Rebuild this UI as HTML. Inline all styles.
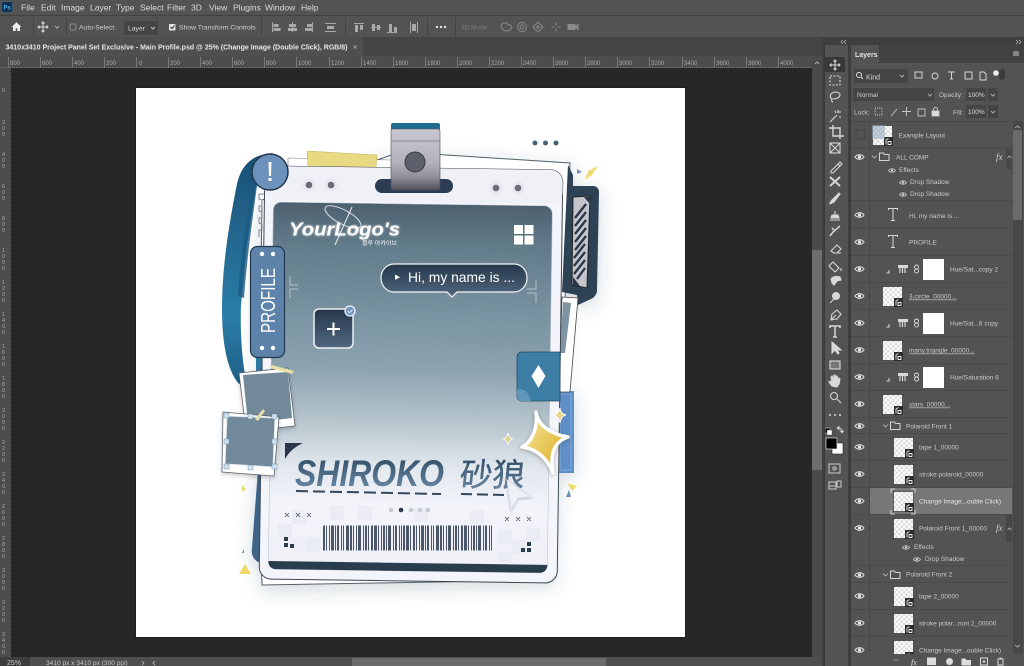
<!DOCTYPE html>
<html><head><meta charset="utf-8"><title>Photoshop</title>
<style>html,body{margin:0;padding:0;background:#272727;overflow:hidden}svg{display:block;filter:blur(.25px)}text{font-family:"Liberation Sans","Noto Sans CJK SC",sans-serif}</style></head>
<body>
<svg width="1024" height="666" viewBox="0 0 1024 666" xmlns="http://www.w3.org/2000/svg">
<defs>
<pattern id="chk" width="5" height="5" patternUnits="userSpaceOnUse"><rect width="5" height="5" fill="#fff"/><rect width="2.500" height="2.500" fill="#dcdcdc"/><rect x="2.500" y="2.500" width="2.500" height="2.500" fill="#dcdcdc"/></pattern>
<pattern id="hatch" width="3" height="3" patternUnits="userSpaceOnUse" patternTransform="rotate(45)"><rect width="1.200" height="3" fill="#000"/></pattern>
<linearGradient id="hfade" x1="0" y1="0" x2="0" y2="1"><stop offset="0" stop-color="#fff" stop-opacity=".07"/><stop offset=".7" stop-color="#fff" stop-opacity=".04"/><stop offset="1" stop-color="#fff" stop-opacity="0"/></linearGradient>
<mask id="hm"><rect x="260" y="200" width="300" height="250" fill="url(#hfade)"/></mask>
<linearGradient id="panel" x1="0" y1="0" x2="0" y2="1"><stop offset="0" stop-color="#4f6373"/><stop offset=".12" stop-color="#66808f"/><stop offset=".3" stop-color="#7c96a5"/><stop offset=".45" stop-color="#8fa6b3"/><stop offset=".6" stop-color="#bac8d0"/><stop offset=".72" stop-color="#e2e8ee"/><stop offset=".82" stop-color="#f2f4fa"/><stop offset="1" stop-color="#f0f1f8"/></linearGradient>
<linearGradient id="lan" x1="0" y1="0" x2="0" y2="1"><stop offset="0" stop-color="#1b4f74"/><stop offset=".7" stop-color="#2a7ea8"/><stop offset="1" stop-color="#1f5f88"/></linearGradient>
<linearGradient id="clip" x1="0" y1="0" x2="0" y2="1"><stop offset="0" stop-color="#c9c8d0"/><stop offset=".55" stop-color="#b3b1ba"/><stop offset=".8" stop-color="#8f8d97"/><stop offset="1" stop-color="#4f4e5a"/></linearGradient>
<linearGradient id="dk" x1="0" y1="0" x2="0" y2="1"><stop offset="0" stop-color="#26374b"/><stop offset="1" stop-color="#50677d"/></linearGradient>
<linearGradient id="nm" x1="0" y1="0" x2="0" y2="1"><stop offset="0" stop-color="#2c4660"/><stop offset="1" stop-color="#7091ad"/></linearGradient>
<linearGradient id="gold" x1="0" y1="0" x2="1" y2="1"><stop offset="0" stop-color="#f5e9a6"/><stop offset=".6" stop-color="#e6c34f"/><stop offset="1" stop-color="#c99e2e"/></linearGradient>
<filter id="sh" x="-20%" y="-20%" width="140%" height="140%"><feDropShadow dx="0" dy="5" stdDeviation="9" flood-color="#2b3f5c" flood-opacity=".2"/></filter>
<filter id="b1"><feGaussianBlur stdDeviation=".35"/></filter>
<filter id="gl" x="-10%" y="-40%" width="120%" height="180%"><feDropShadow dx="0" dy="0" stdDeviation="1.200" flood-color="#fff" flood-opacity=".7"/></filter>
<g id="eye"><path d="M-4.500 0C-2.500-3 2.500-3 4.500 0C2.500 3-2.500 3-4.500 0Z" fill="none" stroke="#e6e6e6" stroke-width="1"/><circle r="1.600" fill="#e6e6e6"/></g>
<g id="eyes"><path d="M-3.500 0C-2-2.300 2-2.300 3.500 0C2 2.300-2 2.300-3.500 0Z" fill="none" stroke="#d0d0d0" stroke-width=".8"/><circle r="1.200" fill="#d0d0d0"/></g>
<g id="thumb"><rect x=".5" y=".5" width="20" height="20" fill="url(#chk)" stroke="#222" stroke-width=".6"/><rect x="12" y="12" width="9" height="9" fill="#2c2c2c"/><path d="M14 19.500v-4.500l2.500-1.500M16 19.500h3v-3h-3z" fill="none" stroke="#eee" stroke-width=".9"/></g>
<g id="hue"><path d="M-10 1v3h-2.500" fill="none" stroke="#ddd" stroke-width="1"/><rect x="-1" y="-4" width="10" height="8" fill="#d8d8d8"/><rect x="-1" y="-1" width="10" height="5" fill="#555"/><path d="M1-1v5M3.500-1v5M6-1v5" stroke="#ddd" stroke-width="1.100"/><circle cx="17.500" cy="-2" r="2" fill="none" stroke="#ddd" stroke-width=".9"/><circle cx="17.500" cy="2" r="2" fill="none" stroke="#ddd" stroke-width=".9"/><rect x="24" y="-10" width="21" height="21" fill="#fff"/></g>
</defs>

<!-- chrome -->
<rect width="1024" height="666" fill="#272727"/>
<rect width="1024" height="15" fill="#535353"/>
<rect y="15" width="1024" height="1" fill="#414141"/>
<rect y="16" width="1024" height="21" fill="#535353"/>
<rect y="37" width="1024" height="19" fill="#454545"/>
<rect y="37" width="363" height="19" fill="#4f4f4f"/>
<rect y="56" width="812" height="12" fill="#4d4d4d"/>
<rect y="56" width="10" height="610" fill="#4d4d4d"/>
<path d="M0 67.500H812M10.500 68V666" stroke="#828282" stroke-dasharray="1 1" stroke-width=".7"/>

<!-- menu -->
<rect x="2" y="2" width="10" height="10" rx="1" fill="#0c2c4a" stroke="#1d5e92" stroke-width=".6"/>
<text x="3.500" y="9.500" font-size="6" font-weight="bold" fill="#53b3f0">Ps</text>
<g font-size="8.500" fill="#dcdcdc">
<text x="21" y="10.500">File</text><text x="41" y="10.500">Edit</text><text x="61" y="10.500">Image</text><text x="90" y="10.500">Layer</text><text x="116" y="10.500">Type</text><text x="140" y="10.500">Select</text><text x="167" y="10.500">Filter</text><text x="191" y="10.500">3D</text><text x="209" y="10.500">View</text><text x="233" y="10.500">Plugins</text><text x="265" y="10.500">Window</text><text x="301" y="10.500">Help</text>
</g>

<!-- options bar -->
<path d="M11.500 27l5-4.800 5 4.800h-1.500v4h-2.700v-2.800h-1.600v2.800h-2.700v-4z" fill="#eee"/>
<path d="M33.500 17.500v18M66.500 17.500v18M157.500 17.500v18M261.500 17.500v18M345.500 17.500v18M427.500 17.500v18M455.500 17.500v18" stroke="#444" stroke-width="1"/>
<g stroke="#dedede" fill="none" stroke-width="1"><path d="M43 22v10M38 27h10M41.500 23.500l1.500-1.500 1.500 1.500M41.500 30.500l1.500 1.500 1.500-1.500M39.500 25.500l-1.500 1.500 1.500 1.500M46.500 25.500l1.500 1.500-1.500 1.500"/><path d="M55 26l2 2 2-2" stroke="#aaa"/><rect x="70" y="24" width="6" height="6" rx="1" stroke="#888"/></g>
<text x="79" y="29.500" font-size="6.800" fill="#cfcfcf">Auto-Select:</text>
<rect x="124" y="21" width="33" height="14" fill="#454545"/>
<text x="128" y="30.500" font-size="6.800" fill="#d6d6d6">Layer</text>
<path d="M151 27l2 2 2-2" stroke="#bbb" fill="none"/>
<rect x="169" y="24" width="6.500" height="6.500" rx="1" fill="#e3e3e3"/><path d="M170.500 27l1.500 1.500 2.500-3" stroke="#333" fill="none"/>
<text x="179" y="29.500" font-size="6.800" fill="#d0d0d0">Show Transform Controls</text>
<g fill="#a9a9a9">
<path d="M272 22h1v10h-1zM273.500 24h5v3h-5zM273.500 28h7v3h-7z"/>
<path d="M292 22h1v10h-1zM289 24h7v3h-7zM288 28h9v3h-9z"/>
<path d="M312 22h1v10h-1zM307 24h5v3h-5zM305 28h7v3h-7z"/>
<path d="M325 23h11v1h-11zM327 26h7v3h-7zM325 31h11v1h-11z"/>
<path d="M354 23h10v1h-10zM355 25h3v7h-3zM360 25h3v5h-3z"/>
<path d="M371 27h10v1h-10zM372 24h3v7h-3zM377 25h3v5h-3z"/>
<path d="M387 32h10v1h-10zM389 24h3v8h-3zM394 27h3v5h-3z"/>
<path d="M410 22h1v11h-1zM417 22h1v11h-1zM412 24h4v7h-4z"/>
</g>
<g fill="#e0e0e0"><circle cx="437" cy="27" r="1.200"/><circle cx="441" cy="27" r="1.200"/><circle cx="445" cy="27" r="1.200"/></g>
<text x="461" y="29.500" font-size="6.500" fill="#7f7f7f">3D Mode:</text>
<g fill="none" stroke="#8a8a8a" stroke-width="1"><path d="M501 26c1-4 6-4 7-1 3-1 5 3 3 4-2 3-9 3-10-3z"/><circle cx="522" cy="27" r="4.500"/><circle cx="522" cy="27" r="2"/><path d="M538 22l5 5-5 5-5-5zM538 25v4M536 27h4"/><path d="M556 22.500v3M556 28.500v3M551.500 27h3M557.500 27h3"/><path d="M568 24.500h7v5h-7zM575 27l3-2.500v5z" fill="#8a8a8a"/></g>

<!-- tab -->
<text x="5.500" y="49.500" font-size="7.400" font-weight="bold" fill="#e6e6e6" textLength="342" lengthAdjust="spacingAndGlyphs">3410x3410 Project Panel Set Exclusive - Main Profile.psd @ 25% (Change Image (Double Click), RGB/8)</text>
<path d="M353.500 45.500l3 3M356.500 45.500l-3 3" stroke="#aaa" stroke-width=".8"/>

<!-- rulers -->
<g font-size="6" fill="#a8a8a8">
<text x="10" y="65">800</text><text x="42" y="65">600</text><text x="74" y="65">400</text><text x="106" y="65">200</text><text x="139" y="65">0</text><text x="170" y="65">200</text><text x="202" y="65">400</text><text x="234" y="65">600</text><text x="266" y="65">800</text><text x="298" y="65">1000</text><text x="331" y="65">1200</text><text x="363" y="65">1400</text><text x="395" y="65">1600</text><text x="427" y="65">1800</text><text x="459" y="65">2000</text><text x="491" y="65">2200</text><text x="523" y="65">2400</text><text x="555" y="65">2600</text><text x="587" y="65">2800</text><text x="619" y="65">3000</text><text x="651" y="65">3200</text><text x="684" y="65">3400</text><text x="716" y="65">3600</text><text x="748" y="65">3800</text><text x="780" y="65">4000</text>
</g>
<g stroke="#8c8c8c" stroke-width=".7"><path d="M8.500 57v10M40.500 57v10M72.500 57v10M104.500 57v10M136.500 57v10M168.500 57v10M200.500 57v10M232.500 57v10M264.500 57v10M296.500 57v10M329.500 57v10M361.500 57v10M393.500 57v10M425.500 57v10M457.500 57v10M489.500 57v10M521.500 57v10M553.500 57v10M585.500 57v10M617.500 57v10M649.500 57v10M682.500 57v10M714.500 57v10M746.500 57v10M778.500 57v10"/></g>
<g font-size="5.500" fill="#a8a8a8">
<text x="2" y="92">0</text>
<text x="2" y="124">2</text><text x="2" y="130">0</text><text x="2" y="136">0</text>
<text x="2" y="156">4</text><text x="2" y="162">0</text><text x="2" y="168">0</text>
<text x="2" y="188">6</text><text x="2" y="194">0</text><text x="2" y="200">0</text>
<text x="2" y="220">8</text><text x="2" y="226">0</text><text x="2" y="232">0</text>
<text x="2" y="252">1</text><text x="2" y="258">0</text><text x="2" y="264">0</text><text x="2" y="270">0</text>
<text x="2" y="284">1</text><text x="2" y="290">2</text><text x="2" y="296">0</text><text x="2" y="302">0</text>
<text x="2" y="316">1</text><text x="2" y="322">4</text><text x="2" y="328">0</text><text x="2" y="334">0</text>
<text x="2" y="348">1</text><text x="2" y="354">6</text><text x="2" y="360">0</text><text x="2" y="366">0</text>
<text x="2" y="380">1</text><text x="2" y="386">8</text><text x="2" y="392">0</text><text x="2" y="398">0</text>
<text x="2" y="412">2</text><text x="2" y="418">0</text><text x="2" y="424">0</text><text x="2" y="430">0</text>
<text x="2" y="444">2</text><text x="2" y="450">2</text><text x="2" y="456">0</text><text x="2" y="462">0</text>
<text x="2" y="476">2</text><text x="2" y="482">4</text><text x="2" y="488">0</text><text x="2" y="494">0</text>
<text x="2" y="508">2</text><text x="2" y="514">6</text><text x="2" y="520">0</text><text x="2" y="526">0</text>
<text x="2" y="540">2</text><text x="2" y="546">8</text><text x="2" y="552">0</text><text x="2" y="558">0</text>
<text x="2" y="572">3</text><text x="2" y="578">0</text><text x="2" y="584">0</text><text x="2" y="590">0</text>
<text x="2" y="604">3</text><text x="2" y="610">2</text><text x="2" y="616">0</text><text x="2" y="622">0</text>
<text x="2" y="636">3</text><text x="2" y="642">4</text><text x="2" y="648">0</text><text x="2" y="654">0</text>
</g>

<!-- artboard -->
<rect x="136" y="88" width="549" height="549" fill="#fff"/>
<rect x="135.500" y="87.500" width="550" height="550" fill="none" stroke="#1b1b1b" stroke-width=".6"/>

<g filter="url(#b1)">
<g filter="url(#sh)">
<!-- back papers -->
<polygon points="400,152 570,163 565,300 553,580 262,585 258,470 262,200" fill="#fff" stroke="#55606d" stroke-width="1"/>
<path d="M258 470h6v92h-6c-5-3-7-8-6-14z" fill="#3e6387"/>
<rect x="558" y="391" width="16" height="82" fill="#5e8fc6"/>
<rect x="560" y="394" width="11" height="76" fill="none" stroke="#8fb2dc" stroke-width=".7"/>
<!-- right dark tab -->
<path d="M568 165l5 10v11h20c4 0 6 3 6 6l-2 98c0 4-2 6-4 8l-15 7-1-10-15-3z" fill="#2f4357"/>
</g>
<polygon points="562,297 578,298 570,392 559,392" fill="#fff" stroke="#444" stroke-width=".8"/>
<polygon points="563,302 571,303 565,353 560,353" fill="#7e94a3"/>
<polygon points="573,197 590,196 587,288 572,285" fill="#c4c4ca" stroke="#222" stroke-width="1"/>
<path d="M586 204l-11 14M586 212l-11 14M586 220l-11 14M586 228l-11 14M586 236l-11 14M585 244l-11 14M585 252l-11 14M585 260l-11 14M585 268l-8 11" stroke="#283646" stroke-width="2.300"/>
<path d="M584 197l6 0-1 6zM573 277l0 8 7 1z" fill="#283646"/>

<!-- lanyard -->
<path d="M270 154c-14 0-28 8-33 30-7 35-15 80-15 125 0 30 4 60 17 75l7-4c-4-20-6-50-5-75l6-60 12-78 14-15z" fill="url(#lan)"/>
<path d="M280 158c-16 0-24 6-28 26-5 32-12 75-14 112l6 2c3-40 8-75 12-105 3-20 8-26 24-28z" fill="#1d5a82" opacity=".8"/>
<rect x="256" y="355" width="15" height="20" fill="#2f78a0"/>
<rect x="266" y="355" width="6" height="20" fill="#fff"/>

<!-- tape + strips -->
<polygon points="288,158 392,160 392,170 288,168" fill="#fff" stroke="#777" stroke-width=".6"/>
<polygon points="307,151 377,155 376,168 308,167" fill="#e8da83" stroke="#b9ad60" stroke-width=".5"/>

<!-- front card -->
<g transform="rotate(.8 411 374)">
<rect x="262" y="168" width="298" height="413" rx="12" fill="#f4f5fa" stroke="#3d4652" stroke-width="1"/>
<rect x="262" y="168" width="298" height="34" rx="12" fill="#f0f0f7"/>
<rect x="271" y="204" width="279" height="367" rx="8" fill="url(#panel)" stroke="#bcc6cf" stroke-width=".6"/>
<rect x="271" y="204" width="279" height="245" rx="8" fill="url(#hatch)" mask="url(#hm)"/>
<path d="M271 563c0 5 3 8 8 8h263c5 0 8-3 8-8z" fill="#2b3c50"/>
</g>
<!-- checkers bottom -->
<g fill="#e6e8f2" opacity=".55">
<rect x="278" y="524" width="14" height="14"/><rect x="292" y="510" width="14" height="14"/><rect x="306" y="538" width="14" height="14"/><rect x="292" y="538" width="14" height="14" opacity=".5"/>
<rect x="330" y="506" width="14" height="14"/><rect x="358" y="506" width="14" height="14"/><rect x="414" y="508" width="14" height="14"/><rect x="470" y="510" width="14" height="14"/>
<rect x="498" y="530" width="14" height="14"/><rect x="512" y="540" width="14" height="14"/><rect x="526" y="528" width="14" height="14"/><rect x="498" y="552" width="14" height="10"/>
</g>

<!-- clip slot + dots -->
<rect x="375" y="179" width="78" height="14" rx="7" fill="#2c3e52"/>
<g fill="#e8e8f0"><circle cx="309" cy="185" r="6.500"/><circle cx="331" cy="185" r="6.500"/><circle cx="496" cy="188" r="6.500"/><circle cx="518" cy="188" r="6.500"/></g>
<g fill="#6c6c76"><circle cx="309" cy="185" r="3.300"/><circle cx="331" cy="185" r="3.300"/><circle cx="496" cy="188" r="3.300"/><circle cx="518" cy="188" r="3.300"/></g>
<!-- clip -->
<rect x="391" y="123" width="49" height="10" rx="2" fill="#1f6d8f"/>
<rect x="391" y="129" width="49" height="61" rx="2" fill="url(#clip)" stroke="#4d4c58" stroke-width=".6"/>
<path d="M391 141h49" stroke="#8b8a94" stroke-width="1"/>
<circle cx="415" cy="162" r="10" fill="#5e5e6c" stroke="#3a3a46" stroke-width="1"/>

<!-- badge circle -->
<circle cx="270" cy="172" r="18" fill="#6c91ba" stroke="#24374e" stroke-width="1.500"/>
<path d="M268.500 162h3l-.5 14h-2zM268.500 178h3v3h-3z" fill="#fff"/>
<!-- profile tag -->
<rect x="250.500" y="246.500" width="34" height="111" rx="7" fill="#5d83aa" stroke="#24384f" stroke-width="1.200"/>
<g fill="#fff"><circle cx="262" cy="254" r="2.200"/><circle cx="273" cy="254" r="2.200"/><circle cx="262" cy="348" r="2.200"/><circle cx="273" cy="348" r="2.200"/></g>
<text transform="translate(275,333) rotate(-90)" font-size="20.500" fill="#fff" textLength="65" lengthAdjust="spacingAndGlyphs">PROFILE</text>
<path d="M259 194h5M259 194v5l3 1v6h-3v5l3 1v6h-3v5l3 1v6h-3v7" fill="none" stroke="#808a96" stroke-width="1"/>

<!-- logo -->
<g filter="url(#gl)">
<text x="289" y="235.500" font-size="18.500" font-weight="bold" font-style="italic" fill="#fff" textLength="111" lengthAdjust="spacingAndGlyphs">YourLogo's</text>
</g>
<text x="362" y="245" font-size="5.500" fill="#fff" textLength="35" lengthAdjust="spacingAndGlyphs">블루 아카이브</text>
<path d="M352 207l-17 38" stroke="#fff" stroke-width="1" opacity=".85"/>
<ellipse cx="343" cy="217" rx="20" ry="7" transform="rotate(28 343 217)" fill="none" stroke="#fff" stroke-width="1.100" opacity=".75"/>
<g fill="#fff"><rect x="514" y="225" width="9" height="9"/><rect x="524.500" y="225" width="9" height="9"/><rect x="514" y="235.500" width="9" height="9"/><rect x="524.500" y="235.500" width="9" height="9"/></g>
<!-- brackets -->
<g fill="none" stroke="#c5ced6" stroke-width="1" opacity=".8"><path d="M290 276v9h8M298 289h-8v9"/><path d="M536 280v9h-9M527 293h9v10"/></g>

<!-- bubble -->
<path d="M394 264h120c7 0 13 6 13 14s-6 14-13 14h-57l-5 5-5-5h-53c-7 0-13-6-13-14s6-14 13-14z" fill="url(#dk)" stroke="#f2f4f7" stroke-width="1.200"/>
<path d="M395 274.500l5 2.700-5 2.700z" fill="#fff"/>
<text x="408" y="282" font-size="14" fill="#fff" textLength="107" lengthAdjust="spacingAndGlyphs">Hi, my name is ...</text>

<!-- plus -->
<rect x="314" y="309" width="39" height="39" rx="5" fill="url(#dk)" stroke="#eef1f5" stroke-width="1.500"/>
<path d="M333.500 322.500v13M327 329h13" stroke="#fff" stroke-width="2"/>
<circle cx="350" cy="311" r="5" fill="#6f97c0" stroke="#eef1f5" stroke-width="1.300"/>
<path d="M347.800 311l1.700 1.700 3-3" stroke="#fff" fill="none" stroke-width=".8"/>

<!-- diamond tab -->
<path d="M522 352h38v49h-38c-3 0-5-2-5-5v-39c0-3 2-5 5-5z" fill="#3c7ea6" stroke="#27475f" stroke-width=".8"/>
<path d="M517 390c6-3 12 2 14 11h-9c-3 0-5-2-5-5z" fill="#5f97ba"/>
<path d="M538.500 365l7 11-7 12-7-12z" fill="#fff"/>

<!-- polaroids -->
<polygon points="239,373 288,368 295,426 246,431" fill="#fff" stroke="#5a6470" stroke-width=".8" style="filter:drop-shadow(0 2px 2px rgba(0,0,0,.2))"/>
<polygon points="243,375 288,372 292,418 248,423" fill="#718999"/>
<polygon points="223,412 279,417 274,476 222,472" fill="#fff" stroke="#5a6470" stroke-width=".8" style="filter:drop-shadow(0 2px 2px rgba(0,0,0,.2))"/>
<polygon points="227,416 275,418 273,467 225,464" fill="#718999" stroke="#dfe9f2" stroke-width="1"/>
<polygon points="272,365 294,371 292,374 270,368" fill="#e9e1a8"/>
<polygon points="255,419 263,409 265,411 258,421" fill="#e6ddac"/>
<g fill="#cfe0ef" stroke="#5f7d96" stroke-width=".4"><rect x="224" y="413" width="5" height="5"/><rect x="248" y="414" width="5" height="5"/><rect x="272" y="414" width="5" height="5"/><rect x="224" y="439" width="5" height="5"/><rect x="272" y="439" width="5" height="5"/><rect x="224" y="464" width="5" height="5"/><rect x="248" y="465" width="5" height="5"/><rect x="272" y="464" width="5" height="5"/></g>

<!-- name block -->
<path d="M285 443h18c-6 3-13 7-18 16z" fill="#2a3849"/>
<text x="295" y="486" font-size="37" font-weight="bold" font-style="italic" fill="url(#nm)" textLength="149" lengthAdjust="spacingAndGlyphs">SHIROKO</text>
<text x="459" y="486" font-size="32" fill="url(#nm)" stroke="#48647f" stroke-width=".4" textLength="65" lengthAdjust="spacingAndGlyphs" transform="skewX(-6) translate(51,0)">砂狼</text>
<path d="M296 491L441 494" stroke="#34465a" stroke-width="2" stroke-dasharray="12 5"/>
<path d="M461 494L505 495" stroke="#34465a" stroke-width="2" stroke-dasharray="11 5"/>
<g fill="#c6cbd3"><circle cx="391" cy="510" r="2.300"/><circle cx="411" cy="510" r="2.300"/><circle cx="420" cy="510" r="2.300"/><circle cx="428" cy="510" r="2.300"/></g><circle cx="401" cy="510" r="2.300" fill="#2b3a4c"/>
<g stroke="#47525f" stroke-width=".8"><path d="M285 513l4 4M289 513l-4 4M296 513l4 4M300 513l-4 4M307 513l4 4M311 513l-4 4"/><path d="M505 517l4 4M509 517l-4 4M516 517l4 4M520 517l-4 4M527 517l4 4M531 517l-4 4"/></g>
<g fill="#2a3a4c"><rect x="284" y="537" width="4" height="4"/><rect x="284" y="543" width="4" height="4"/><rect x="290" y="544" width="4" height="4"/><rect x="527" y="542" width="4" height="4"/><rect x="521" y="548" width="4" height="4"/><rect x="527" y="548" width="4" height="4"/></g>
<!-- barcode -->
<path d="M323 538H492" stroke="#2f3c4f" stroke-opacity=".85" stroke-width="25" stroke-dasharray="2 1 1 2 1 1 3 1 1 1 2 2 1 1 1 2 3 1 2 1 1 2 1 1 3 2 1 1 2 1 1 2 2 1 3 1 1 2 1 1 2 1 1 1 3 2 1 1 2 2 1 1 1 1 2 1 3 1 1 2"/>

<!-- stars + cursor -->
<path d="M536 412C538 425 550 434 568 437C556 441 549 452 553 473C548 460 538 449 522 447C532 442 538 428 536 412Z" fill="url(#gold)" stroke="#fff" stroke-width="3.500" stroke-linejoin="round" style="filter:drop-shadow(0 1px 2px rgba(60,60,60,.4))"/>
<path d="M560 408c.5 4 2 6 6 7-4 1-5 3-6 8-1-5-3-7-6-8 3-1 5-3 6-7z" fill="#e6d38a" stroke="#fff" stroke-width="1"/>
<path d="M508 433c.5 3 1.500 5 4.500 6-3 1-4 3-4.500 6-.5-3-2-5-4.500-6 3-1 4-3 4.500-6z" fill="#e0cd87" stroke="#fff" stroke-width=".8"/>
<path d="M507 480l24 17-13 1-7 12z" fill="#eef1f6" stroke="#d7dce6" stroke-width="1" style="filter:drop-shadow(0 1px 1px rgba(60,70,90,.3))"/>

<!-- dots + triangles -->
<g fill="#456277"><circle cx="535" cy="143" r="2.500"/><circle cx="545.500" cy="143" r="2.500"/><circle cx="556" cy="143" r="2.500"/></g>
<path d="M598 166L588 171L585 180L592 175Z" fill="#efdc6f"/>
<path d="M577 169l5 3-5 2z" fill="#6d8fb5"/>
<path d="M245 564l6 10h-12z" fill="#ecd96b"/>
<path d="M242 485v7l4-3z" fill="#ecd96b"/>
<path d="M242 553l2-4v4z" fill="#6d8fb5"/>
<path d="M567 483l10 3-5 5z" fill="#efdc6f"/>
<path d="M569 490l2 7-5 0z" fill="#6d8fb5"/>
</g>

<!-- scrollbars -->
<rect x="812" y="56" width="10" height="610" fill="#4a4a4a"/>
<rect x="812" y="250" width="10" height="220" fill="#6e6e6e"/>
<path d="M815 64l2-2 2 2" stroke="#aaa" fill="none"/>
<rect x="0" y="657" width="822" height="9" fill="#4f4f4f"/>
<rect x="0" y="657" width="30" height="9" fill="#3d3d3d"/>
<rect x="352" y="658" width="254" height="8" fill="#6a6a6a"/>
<text x="7" y="665" font-size="7" fill="#c8c8c8">25%</text>
<text x="46" y="665" font-size="6.600" fill="#c8c8c8">3410 px x 3410 px (300 ppi)</text>
<path d="M142 661l2 2-2 2M155 661l-2 2 2 2" stroke="#ccc" fill="none" stroke-width=".7"/>

<!-- right docks -->
<rect x="822" y="37" width="202" height="629" fill="#3f3f3f"/>
<rect x="824" y="45" width="24" height="621" fill="#535353"/>
<rect x="851" y="45" width="173" height="621" fill="#4f4f4f"/>
<rect x="851" y="45" width="173" height="18" fill="#424242"/>
<rect x="851" y="45" width="28" height="18" fill="#535353"/>
<rect x="851" y="63" width="173" height="591" fill="#535353"/>
<text x="855" y="57" font-size="7" font-weight="bold" fill="#e4e4e4">Layers</text>
<rect x="1013" y="51" width="6" height="5" fill="#858585"/>
<path d="M843 40l-2 2 2 2M846 40l-2 2 2 2M1016 40l2 2-2 2M1019 40l2 2-2 2" stroke="#bbb" fill="none" stroke-width=".7"/>

<!-- tools -->
<rect x="825" y="57" width="20" height="15" fill="#383838"/>
<g fill="none" stroke="#d8d8d8" stroke-width="1.100">
<path d="M835 60v10M830 65h10M833.500 61.500l1.500-1.500 1.500 1.500M833.500 68.500l1.500 1.500 1.500-1.500M831.500 63.500l-1.500 1.500 1.500 1.500M838.500 63.500l1.500 1.500-1.500 1.500"/>
<rect x="830" y="76" width="10" height="9" stroke-dasharray="2 1.500"/>
<path d="M832 99c-3-2-2-6 3-7 5 0 6 3 4 5-2 2-5 2-7 2-1 2 0 3 1 3"/>
<path d="M830 122l7-7M838 110v3M841 112h-3M841 117h-2M835 111l1 2"/>
<path d="M833 125v11h11M829 128h11v11" stroke-width="1.400"/>
<rect x="830" y="143" width="10" height="10"/><path d="M830 143l10 10M840 143l-10 10"/>
<path d="M831 171l7-7 2 2-7 7h-2zM838 164l2-2 2 2-2 2"/>
<path d="M830 177l10 9M840 177l-10 9" stroke-width="2"/>
<path d="M830 203l2-3 7-7 1 1-6 8-4 2z" fill="#d8d8d8"/>
<path d="M835 211v4M832 215h6l1 3h-8zM830 220h10" fill="#d8d8d8"/>
<path d="M830 236l3-4 7-6M832 228l2 2" stroke-width="1.500"/>
<path d="M831 251l6-6 4 4-4 4h-3zM833 253h8"/>
<path d="M833 262l6 6-4 4-6-6zM841 268v3"/>
<path d="M831 279c2-3 6-3 9-2l1 3-4 1-3 4-2-2z" fill="#d8d8d8"/>
<circle cx="836" cy="296" r="3.500" fill="#d8d8d8"/><path d="M834 299l-4 4"/>
<path d="M831 320l1-6 5-4 4 4-4 5zM836 315l-5 5"/>
<path d="M830 328v-2h10v2M835 326v11M833 337h4" stroke-width="1.500"/>
<path d="M832 342v11l3-3 3 4 1-1-2-3h4z" fill="#d8d8d8"/>
<rect x="830" y="361" width="10" height="8" fill="#777"/>
<path d="M832 386l-3-4 1-1 2 1-1-5 1-1 2 3v-4h1l1 4v-3h1l1 4 1-2 1 1-1 5-2 3z" fill="#d8d8d8"/>
<circle cx="834" cy="396" r="3.500"/><path d="M837 399l4 4"/>
</g>
<g fill="#d8d8d8"><circle cx="830" cy="415" r="1"/><circle cx="835" cy="415" r="1"/><circle cx="840" cy="415" r="1"/></g>
<rect x="825" y="428" width="5" height="5" fill="#000" stroke="#ddd" stroke-width=".5"/><rect x="827" y="430" width="5" height="5" fill="#fff" stroke="#333" stroke-width=".4"/>
<path d="M838 428c3 0 4 1 4 4M837 428l2-1.500v3zM842 433l-1.500-2h3z" stroke="#ddd" fill="none" stroke-width=".8"/>
<rect x="832" y="443" width="11" height="11" fill="#fff" stroke="#222" stroke-width=".6"/>
<rect x="826" y="438" width="11" height="11" fill="#000" stroke="#ddd" stroke-width=".7"/>
<rect x="829" y="464" width="11" height="9" fill="none" stroke="#ccc"/><circle cx="834.500" cy="468.500" r="2.500" fill="#999"/>
<path d="M829 486h8v-5h4v6h-4M829 482h7v7h-7z" fill="none" stroke="#ccc"/>
<path d="M824.500 45v621M850.500 45v621" stroke="#3a3a3a" stroke-width="1"/>

<!-- layers controls -->
<rect x="854" y="69" width="54" height="14" fill="#454545"/>
<circle cx="859" cy="75" r="2.500" fill="none" stroke="#ddd"/><path d="M861 77l2 2" stroke="#ddd"/>
<text x="866" y="79.500" font-size="7" fill="#d8d8d8">Kind</text>
<path d="M900 75l2 2 2-2" stroke="#aaa" fill="none"/>
<g fill="none" stroke="#d5d5d5"><rect x="915" y="72" width="7" height="6"/><circle cx="935" cy="76" r="3"/><path d="M948 72h7M951.500 72v7M950 79h3"/><rect x="965" y="72" width="7" height="7"/><path d="M980 72h4l2 2v6h-6z"/></g>
<rect x="999" y="69" width="6" height="11" rx="3" fill="#3a3a3a"/><circle cx="996" cy="73" r="2.800" fill="#eee"/>
<rect x="853" y="88" width="81" height="13" fill="#454545"/>
<text x="857" y="97" font-size="6.500" fill="#d0d0d0">Normal</text>
<path d="M928 94l2 2 2-2" stroke="#aaa" fill="none"/>
<text x="939" y="97" font-size="6.500" fill="#c8c8c8">Opacity:</text>
<rect x="966" y="88" width="20" height="13" fill="#454545"/><text x="968" y="97" font-size="6.500" fill="#dedede">100%</text>
<rect x="988" y="88" width="10" height="13" fill="#454545"/><path d="M991 94l2 2 2-2" stroke="#aaa" fill="none"/>
<text x="854" y="114.500" font-size="6.500" fill="#c8c8c8">Lock:</text>
<g fill="none" stroke="#c8c8c8" stroke-width=".9"><rect x="875" y="108" width="7" height="7" stroke-dasharray="1 1"/><path d="M891 116l6-7"/><path d="M906.500 107v9M902 111.500h9"/><rect x="918" y="109" width="7" height="7"/><rect x="932" y="111" width="7" height="5" fill="#ddd"/><path d="M933.500 111v-1.500a2 2 0 0 1 4 0v1.500"/></g>
<text x="953" y="114.500" font-size="6.500" fill="#c8c8c8">Fill:</text>
<rect x="966" y="105" width="20" height="13" fill="#454545"/><text x="968" y="114" font-size="6.500" fill="#dedede">100%</text>
<rect x="988" y="105" width="10" height="13" fill="#454545"/><path d="M991 111l2 2 2-2" stroke="#aaa" fill="none"/>

<!-- layer rows -->
<rect x="870" y="488" width="142" height="26" fill="#777"/>
<path d="M851 121.500H1012M851 147.500H1012M851 200.500H1012M851 228.500H1012M851 255.500H1012M851 282.500H1012M851 309.500H1012M851 336.500H1012M851 363.500H1012M851 390.500H1012M851 417.500H1012M851 433.500H1012M851 460.500H1012M851 487.500H1012M851 514.500H1012M851 565.500H1012M851 582.500H1012M851 609.500H1012M851 636.500H1012M869.500 122V654" stroke="#4a4a4a" stroke-width="1"/>
<rect x="1013" y="121" width="10" height="533" fill="#474747"/>
<rect x="1013" y="130" width="9" height="90" fill="#6a6a6a"/>
<path d="M1015 128l2.500-2 2.500 2M1015 645l2.500 2 2.500-2" stroke="#aaa" fill="none"/>

<rect x="856" y="130" width="9" height="9" fill="none" stroke="#444"/>
<use href="#thumb" x="872" y="125"/>
<rect x="872" y="125" width="13" height="14" fill="#8fa7bd" opacity=".55"/>
<use href="#eye" x="859.500" y="157"/>
<use href="#eye" x="859.500" y="215"/>
<use href="#eye" x="859.500" y="242"/>
<use href="#eye" x="859.500" y="269"/>
<use href="#eye" x="859.500" y="296"/>
<use href="#eye" x="859.500" y="323"/>
<use href="#eye" x="859.500" y="350"/>
<use href="#eye" x="859.500" y="377"/>
<use href="#eye" x="859.500" y="404"/>
<use href="#eye" x="859.500" y="426"/>
<use href="#eye" x="859.500" y="447"/>
<use href="#eye" x="859.500" y="474"/>
<use href="#eye" x="859.500" y="501"/>
<use href="#eye" x="859.500" y="528"/>
<use href="#eye" x="859.500" y="575"/>
<use href="#eye" x="859.500" y="596"/>
<use href="#eye" x="859.500" y="623"/>
<use href="#eye" x="859.500" y="650"/>
<use href="#eyes" x="892" y="170.500"/>
<use href="#eyes" x="903" y="182.500"/>
<use href="#eyes" x="903" y="194.500"/>
<use href="#eyes" x="906" y="547.500"/>
<use href="#eyes" x="917" y="559.500"/>

<path d="M872 155.500l2.500 2.500 2.500-2.500M883 424.500l2.500 2.500 2.500-2.500M883 573.500l2.500 2.500 2.500-2.500" stroke="#bdbdbd" fill="none" stroke-width=".8"/>
<path d="M879.500 153h4l1 1.500h4.500v6h-9.500z" fill="none" stroke="#d5d5d5"/>
<path d="M890.500 422h4l1 1.500h4.500v6h-9.500z" fill="none" stroke="#d5d5d5"/>
<path d="M890.500 571h4l1 1.500h4.500v6h-9.500z" fill="none" stroke="#d5d5d5"/>
<path d="M888.500 210v-1.500h9v1.500M893 208.500v12M891 220.500h4" stroke="#d8d8d8" fill="none" stroke-width="1"/>
<path d="M888.500 237v-1.500h9v1.500M893 235.500v12M891 247.500h4" stroke="#d8d8d8" fill="none" stroke-width="1"/>

<g fill="#c9c9c9" font-size="6.500">
<text x="898.500" y="137.500">Example Layout</text>
<text x="896" y="159.500">ALL COMP</text>
<text x="899" y="172">Effects</text>
<text x="910" y="184">Drop Shadow</text>
<text x="910" y="196">Drop Shadow</text>
<text x="909" y="218">Hi, my name is ...</text>
<text x="909" y="244.500">PROFILE</text>
<text x="950" y="271.500">Hue/Sat...copy 2</text>
<text x="909" y="298.500" text-decoration="underline">3.circle_00000...</text>
<text x="950" y="325.500">Hue/Sat...6 copy</text>
<text x="909" y="352.500" text-decoration="underline">many.triangle_00000...</text>
<text x="950" y="379.500">Hue/Saturation 6</text>
<text x="909" y="406.500" text-decoration="underline">stars_00000...</text>
<text x="906" y="428.500">Polaroid Front 1</text>
<text x="919" y="449.500">tape 1_00000</text>
<text x="919" y="476.500">stroke polaroid_00000</text>
<text x="919" y="503.500" fill="#e6e6e6">Change Image...ouble Click)</text>
<text x="919" y="530.500">Polaroid Front 1_00000</text>
<text x="914" y="549">Effects</text>
<text x="925" y="561">Drop Shadow</text>
<text x="906" y="576.500">Polaroid Front 2</text>
<text x="919" y="598.500">tape 2_00000</text>
<text x="919" y="625.500">stroke polar...ront 2_00000</text>
<text x="919" y="652.500">Change Image...ouble Click)</text>
</g>
<text x="996" y="160" font-size="9" font-style="italic" style="font-family:'Liberation Serif',serif" fill="#d0d0d0">fx</text>
<text x="996" y="531" font-size="9" font-style="italic" style="font-family:'Liberation Serif',serif" fill="#d0d0d0">fx</text>
<rect x="1006" y="149" width="6" height="20" fill="#474747"/><rect x="1006" y="515" width="6" height="27" fill="#474747"/>
<path d="M1007.500 158l2-2 2 2M1007.500 530l2-2 2 2" stroke="#bbb" fill="none" stroke-width=".8"/>

<use href="#thumb" x="882" y="286"/>
<use href="#thumb" x="882" y="340"/>
<use href="#thumb" x="882" y="394"/>
<use href="#thumb" x="893" y="437"/>
<use href="#thumb" x="893" y="464"/>
<use href="#thumb" x="893" y="491"/>
<use href="#thumb" x="893" y="518"/>
<use href="#thumb" x="893" y="586"/>
<use href="#thumb" x="893" y="613"/>
<use href="#thumb" x="893" y="640"/>
<path d="M891 493v-4h4M911 489h4v4M891 510v4h4M915 510v4h-4" stroke="#eee" fill="none" stroke-width=".8"/>
<g><use href="#hue" x="899" y="269"/><use href="#hue" x="899" y="323"/><use href="#hue" x="899" y="377"/></g>

<!-- panel bottom -->
<rect x="851" y="654" width="173" height="12" fill="#535353"/>
<rect x="1013" y="654" width="11" height="12" fill="#535353"/>
<path d="M893 660h6" stroke="#757575" stroke-width="2"/>
<text x="911" y="665" font-size="8" font-style="italic" style="font-family:'Liberation Serif',serif" fill="#ddd">fx</text>
<g fill="none" stroke="#ddd"><rect x="927.500" y="658" width="8" height="6.500" fill="#ddd"/><circle cx="949.500" cy="661.500" r="3" fill="#ddd"/><path d="M962 659h3l1 1.500h4.500v4.500h-8.500z" fill="#ddd"/><rect x="980.500" y="658" width="7" height="7"/><path d="M984 660v3M982.500 661.500h3"/><path d="M997 659h7M998 660v5h5v-5M999.500 658h2"/></g>
</svg>
</body></html>
